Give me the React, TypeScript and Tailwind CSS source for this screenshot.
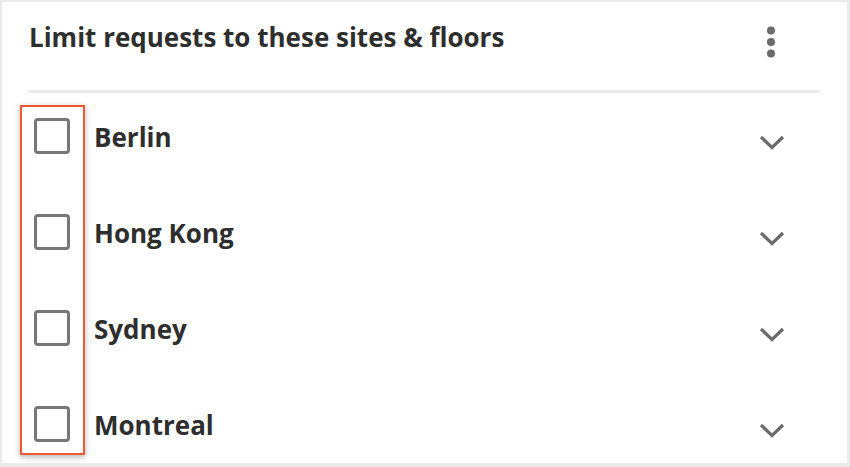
import React from 'react';

const sites = ['Berlin', 'Hong Kong', 'Sydney', 'Montreal'];

function Chevron() {
    return (
        <svg width="26" height="16" viewBox="0 0 26 16" className="mt-[12px]">
            <polyline points="2,3 13,13.5 24,3" fill="none" stroke="#6b6b6b" strokeWidth="3.2" />
        </svg>
    );
}

function Kebab() {
    return (
        <svg width="10" height="34" viewBox="0 0 10 34">
            <circle cx="5" cy="4.5" r="4" fill="#6b6b6b" />
            <circle cx="5" cy="16" r="4" fill="#6b6b6b" />
            <circle cx="5" cy="27.5" r="4" fill="#6b6b6b" />
        </svg>
    );
}

export default function App() {
    return (
        <div className="h-[467px] w-[850px] bg-[#ebebeb] pt-[2px] pl-[2px]" style={{ fontFamily: '"Open Sans", sans-serif' }}>
            <div className="relative h-[461px] w-[845px] bg-white">
                {/* Header */}
                <div className="flex items-start justify-between pl-[27px] pr-[71px] pt-[19px]">
                    <h1 className="text-[26px] font-bold leading-[32px] text-[#2e2e2e]">
                        Limit requests to these sites &amp; floors
                    </h1>
                    <div className="mt-[5px]">
                        <Kebab />
                    </div>
                </div>
                <div className="ml-[26px] mr-[27px] mt-[30px] h-[3px] bg-[#ebebeb]" />

                {/* Site rows */}
                <div className="flex flex-col gap-[60px] pl-[32px] pr-[62px] pt-[25px]">
                    {sites.map((site) => (
                        <div key={site} className="flex h-[36px] items-center">
                            <div className="h-[36px] w-[36px] rounded-[4px] border-[3px] border-[#767676]" />
                            <span className="ml-[24px] mt-[2px] flex-1 text-[26px] font-bold leading-[36px] text-[#2e2e2e]">{site}</span>
                            <Chevron />
                        </div>
                    ))}
                </div>

                {/* Highlight annotation */}
                <div className="absolute left-[18px] top-[103px] h-[350px] w-[65px] border-2 border-[#f05a30] shadow-[0_2px_6px_rgba(0,0,0,0.3)]" />
            </div>
        </div>
    );
}
